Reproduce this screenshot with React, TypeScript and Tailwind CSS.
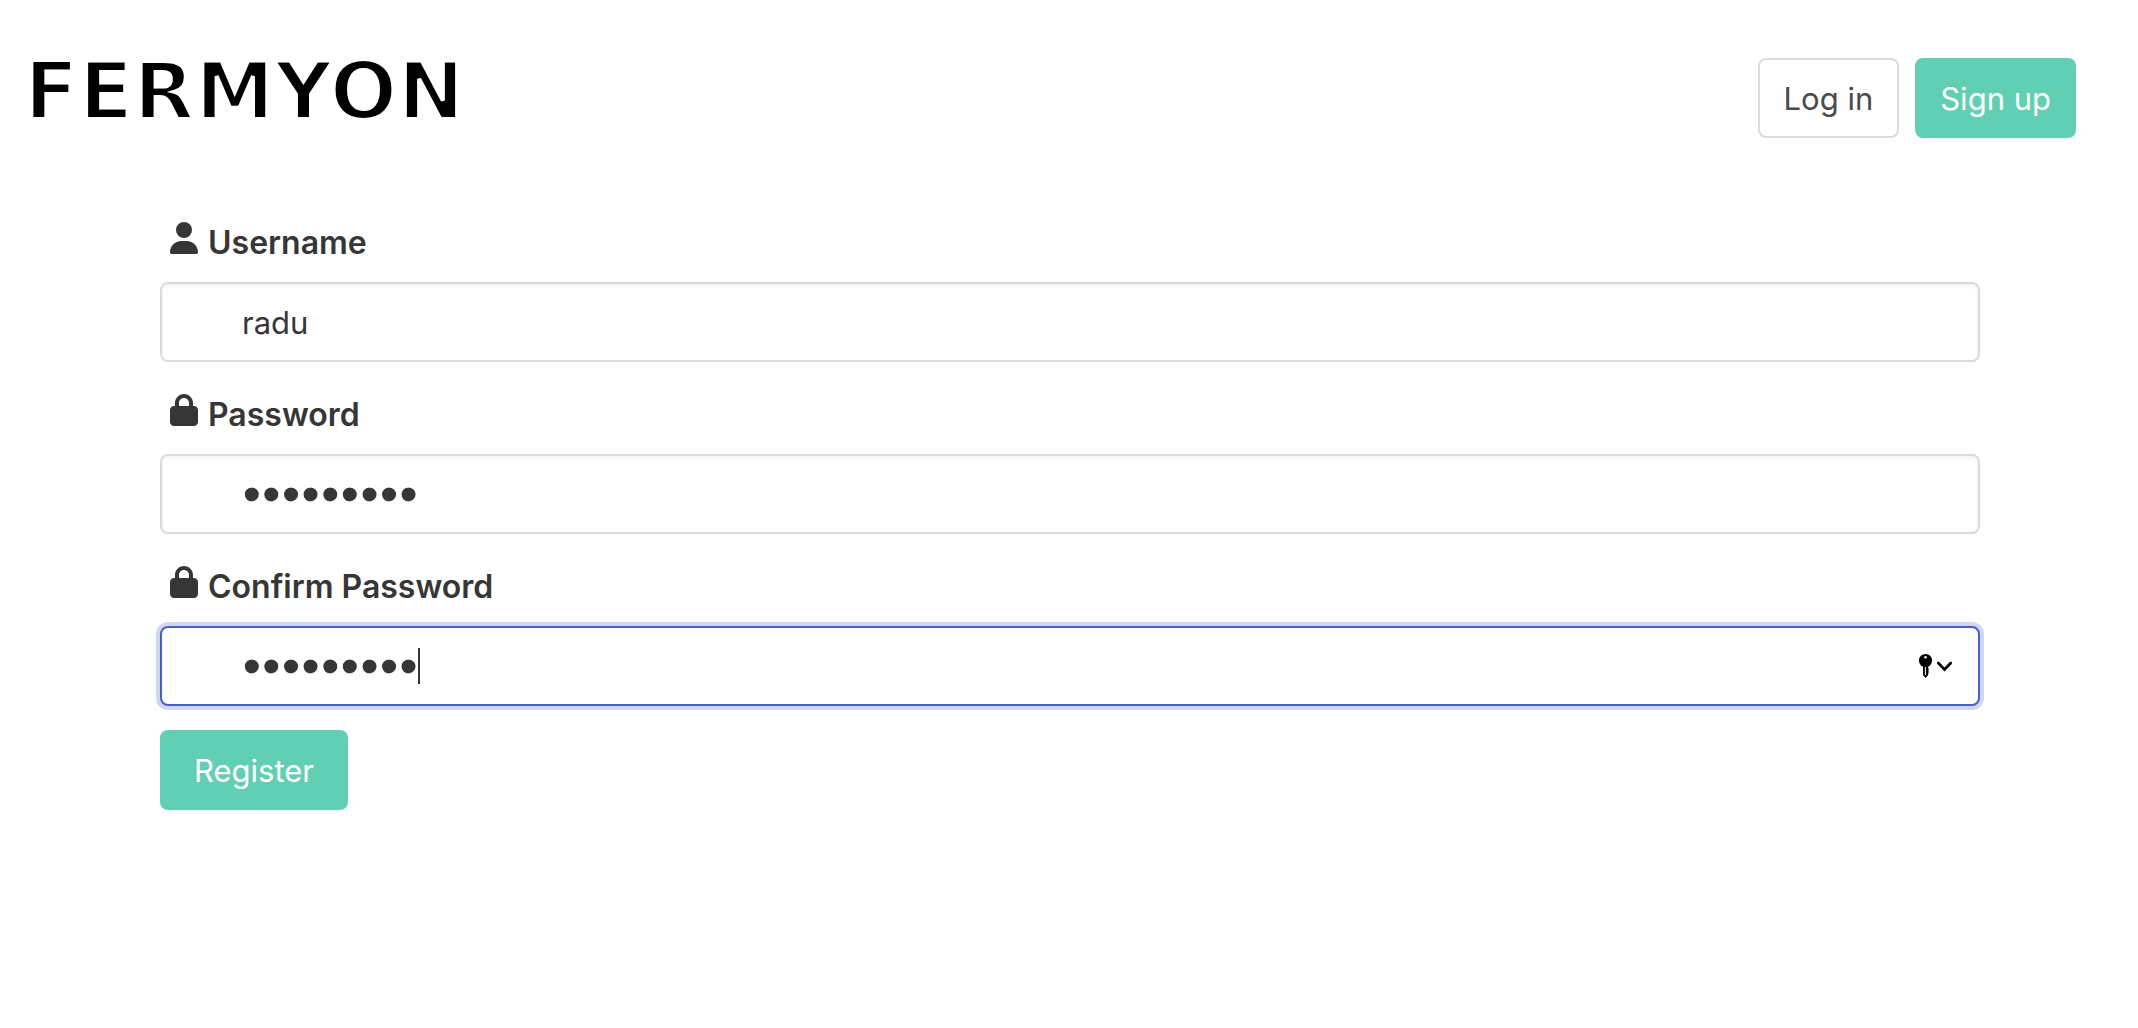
import React, { useState } from 'react';
import { FaLock, FaUser } from 'react-icons/fa6';

interface FieldProps {
  id: string;
  label: string;
  icon: React.ReactNode;
  children: React.ReactNode;
}

const inputClass =
  'block w-full h-20 pl-20 pr-6 rounded-lg border-2 bg-white text-[#363636] focus:outline-none';
const textClass = 'text-[31px]';
const passwordClass = "font-['Liberation_Sans',sans-serif] text-[56px] [-webkit-text-stroke:1px_white]";
const idleClass = 'border-[#dbdbdb] shadow-[inset_0_2px_4px_rgba(10,10,10,0.05)]';
const activeClass = 'border-[#485fc7] shadow-[0_0_0_4px_rgba(72,95,199,0.25)] caret-transparent';

const Field: React.FC<FieldProps> = ({ id, label, icon, children }) => (
  <div className="mb-6">
    <label htmlFor={id} className="flex h-[68px] items-start pl-[10px] text-[32px] leading-[58px] font-semibold">
      {icon}
      <span className="ml-[10px]">{label}</span>
    </label>
    {children}
  </div>
);

const KeyMenuIcon = () => (
  <svg className="w-9 h-7" viewBox="0 0 36 28" fill="none" aria-hidden="true">
    <circle cx="7.5" cy="7.5" r="6.6" fill="#000" />
    <circle cx="7.5" cy="4.3" r="1.3" fill="#fff" />
    <path d="M5 13h5.2v2.5l.8 1-.8 1.2.8 1.2-.8 1.2v2L7.6 25 5 22z" fill="#000" />
    <path d="M7.4 14v8" stroke="#fff" strokeWidth="1" />
    <path d="M20.3 10l6.2 6.5 6.2-6.5" stroke="#000" strokeWidth="2.6" strokeLinecap="round" />
  </svg>
);

const App: React.FC = () => {
  const [username, setUsername] = useState('radu');
  const [password, setPassword] = useState('password1');
  const [confirm, setConfirm] = useState('password1');

  return (
    <div className="bg-white font-['Inter','Liberation_Sans',sans-serif] text-[#363636]">
      <header className="flex items-start justify-between pt-[58px] pl-6 pr-[62px]">
        <a
          href="#"
          className="font-['DejaVu_Sans',sans-serif] text-[80px] leading-[68px] font-bold text-black [-webkit-text-stroke:4px_white]"
        >
          FERMYON
        </a>
        <div className="flex gap-4">
          <button type="button" className="h-20 px-6 pt-0.5 rounded-lg border-2 border-[#dbdbdb] bg-white text-[31px] text-[#4a4a4a]">
            Log in
          </button>
          <button type="button" className="h-20 px-[25px] pt-0.5 rounded-lg bg-[#61cfb4] text-[31px] text-white">
            Sign up
          </button>
        </div>
      </header>

      <form className="pt-[76px] pl-40 pr-[158px]" onSubmit={(e) => e.preventDefault()}>
        <Field id="username" label="Username" icon={<FaUser className="mt-2 w-7 h-8" />}>
          <input
            id="username"
            type="text"
            value={username}
            onChange={(e) => setUsername(e.target.value)}
            className={`${inputClass} ${textClass} ${idleClass}`}
          />
        </Field>

        <Field id="password" label="Password" icon={<FaLock className="mt-2 w-7 h-8" />}>
          <input
            id="password"
            type="password"
            value={password}
            onChange={(e) => setPassword(e.target.value)}
            className={`${inputClass} ${passwordClass} ${idleClass}`}
          />
        </Field>

        <Field id="confirm" label="Confirm Password" icon={<FaLock className="mt-2 w-7 h-8" />}>
          <div className="relative">
            <input
              id="confirm"
              type="password"
              value={confirm}
              onChange={(e) => setConfirm(e.target.value)}
              className={`${inputClass} ${passwordClass} ${activeClass}`}
            />
            <span className="absolute left-[258px] top-[22px] w-0.5 h-9 bg-[#363636]" />
            <button type="button" aria-label="Saved passwords" className="absolute right-[26px] top-[27px]">
              <KeyMenuIcon />
            </button>
          </div>
        </Field>

        <button type="submit" className="h-20 px-[34px] pt-0.5 rounded-lg bg-[#61cfb4] text-[31px] text-white">
          Register
        </button>
      </form>
    </div>
  );
};

export default App;
